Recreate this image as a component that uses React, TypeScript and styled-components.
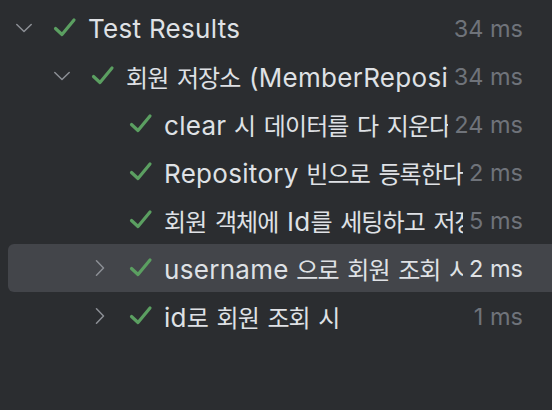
import styled, { createGlobalStyle } from "styled-components";

const GlobalStyle = createGlobalStyle`
  html, body {
    margin: 0;
    padding: 0;
    background: #2b2d30;
    overflow: hidden;
  }
  body {
    font-family: Inter, "Noto Sans CJK KR", sans-serif;
  }
`;

const Tree = styled.ul`
  list-style: none;
  margin: 0;
  padding: 4px 0 0 0;
  width: 552px;
  height: 410px;
  box-sizing: border-box;
  background: #2b2d30;
`;

const Row = styled.li<{ $level: number; $selected?: boolean }>`
  display: flex;
  align-items: center;
  height: 48px;
  margin-left: 8px;
  padding-left: ${(p) => 8 + p.$level * 38}px;
  padding-right: 29px;
  border-radius: 6px 0 0 6px;
  background: ${(p) => (p.$selected ? "#43454a" : "transparent")};
`;

const Toggle = styled.span`
  display: flex;
  align-items: center;
  justify-content: center;
  width: 16px;
  height: 16px;
  flex-shrink: 0;
  margin-right: 21px;
  color: #8c8f95;
`;

const Status = styled.span`
  display: flex;
  align-items: center;
  justify-content: center;
  width: 24px;
  height: 24px;
  flex-shrink: 0;
  margin-right: 11px;
  color: #5b9f61;
`;

const Name = styled.span`
  flex: 1;
  min-width: 0;
  overflow: hidden;
  white-space: nowrap;
  font-size: 26px;
  color: #dfe1e5;
  letter-spacing: 0.3px;
`;

const Hangul = styled.span`
  font-family: "Noto Sans CJK KR", sans-serif;
  font-size: 24px;
  letter-spacing: -0.9px;
  margin-right: 0.9px;
`;

const Duration = styled.span<{ $selected?: boolean }>`
  flex-shrink: 0;
  margin-left: 6px;
  font-size: 23.5px;
  color: ${(p) => (p.$selected ? "#dfe1e5" : "#6f737a")};
`;

type Toggle = "open" | "closed" | "none";

interface TestNode {
  name: string;
  time: string;
  level: number;
  toggle: Toggle;
  selected?: boolean;
}

const nodes: TestNode[] = [
  { name: "Test Results", time: "34 ms", level: 0, toggle: "open" },
  { name: "회원 저장소 (MemberRepositoryTest)", time: "34 ms", level: 1, toggle: "open" },
  { name: "clear 시 데이터를 다 지운다", time: "24 ms", level: 2, toggle: "none" },
  { name: "Repository 빈으로 등록한다", time: "2 ms", level: 2, toggle: "none" },
  { name: "회원 객체에 Id를 세팅하고 저장한다", time: "5 ms", level: 2, toggle: "none" },
  { name: "username 으로 회원 조회 시", time: "2 ms", level: 2, toggle: "closed", selected: true },
  { name: "id로 회원 조회 시", time: "1 ms", level: 2, toggle: "closed" },
];

// hangul runs get a narrower setting so the Noto glyphs fit like the mac system font
const splitScript = (text: string) =>
  text.split(/([\uAC00-\uD7A3]+)/).filter(Boolean).map((part, i) =>
    /[\uAC00-\uD7A3]/.test(part) ? <Hangul key={i}>{part}</Hangul> : <span key={i}>{part}</span>
  );

const Chevron = ({ dir }: { dir: Toggle }) => {
  if (dir === "none") return null;
  const d = dir === "open" ? "M0.8 4.5 L8 11.5 L15.2 4.5" : "M4.5 0.8 L11.5 8 L4.5 15.2";
  return (
    <svg width="16" height="16" viewBox="0 0 16 16" fill="none">
      <path d={d} stroke="currentColor" strokeWidth="1.5" strokeLinecap="round" strokeLinejoin="round" />
    </svg>
  );
};

const Check = () => (
  <svg width="24" height="24" viewBox="0 0 24 24" fill="none">
    <path
      d="M2.5 12.5 L9 18.5 L21 4"
      stroke="currentColor"
      strokeWidth="3.2"
      strokeLinecap="round"
      strokeLinejoin="round"
    />
  </svg>
);

export default function App() {
  return (
    <>
      <GlobalStyle />
      <Tree>
        {nodes.map((node) => (
          <Row key={node.name} $level={node.level} $selected={node.selected}>
            <Toggle>
              <Chevron dir={node.toggle} />
            </Toggle>
            <Status>
              <Check />
            </Status>
            <Name>{splitScript(node.name)}</Name>
            <Duration $selected={node.selected}>{node.time}</Duration>
          </Row>
        ))}
      </Tree>
    </>
  );
}
